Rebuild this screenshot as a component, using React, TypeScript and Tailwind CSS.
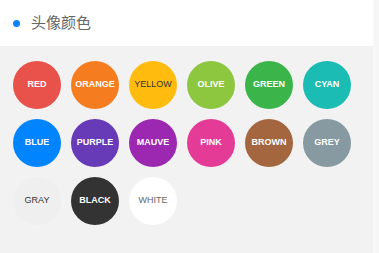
const colors = [
  { name: 'RED', bg: 'bg-[#e8524a]', text: 'text-white font-bold' },
  { name: 'ORANGE', bg: 'bg-[#f57d20]', text: 'text-white font-bold' },
  { name: 'YELLOW', bg: 'bg-[#ffbc0f]', text: 'text-[#333333]' },
  { name: 'OLIVE', bg: 'bg-[#8dc63f]', text: 'text-white font-bold' },
  { name: 'GREEN', bg: 'bg-[#3bb54a]', text: 'text-white font-bold' },
  { name: 'CYAN', bg: 'bg-[#1bbcb3]', text: 'text-white font-bold' },
  { name: 'BLUE', bg: 'bg-[#0084ff]', text: 'text-white font-bold' },
  { name: 'PURPLE', bg: 'bg-[#673ab7]', text: 'text-white font-bold' },
  { name: 'MAUVE', bg: 'bg-[#9c27b0]', text: 'text-white font-bold' },
  { name: 'PINK', bg: 'bg-[#e43b96]', text: 'text-white font-bold' },
  { name: 'BROWN', bg: 'bg-[#a3663e]', text: 'text-white font-bold' },
  { name: 'GREY', bg: 'bg-[#8799a1]', text: 'text-white font-bold' },
  { name: 'GRAY', bg: 'bg-[#efefef]', text: 'text-[#333333]' },
  { name: 'BLACK', bg: 'bg-[#333333]', text: 'text-white font-bold' },
  { name: 'WHITE', bg: 'bg-white', text: 'text-[#666666]' },
];

export default function App() {
  return (
    <div className="flex h-[253px] w-[379px] bg-[#f2f2f2] font-['Liberation_Sans','Noto_Sans_CJK_SC',sans-serif]">
      <div className="flex-1">
        <div className="flex h-[46px] items-center bg-white pl-[13px]">
          <span className="h-[7px] w-[7px] rounded-full bg-[#0a84ff]" />
          <span className="ml-[11px] text-[15px] text-[#666666]">头像颜色</span>
        </div>
        <div className="grid grid-cols-[repeat(6,48px)] gap-[10px] pl-[13px] pt-[15px]">
          {colors.map(c => (
            <div
              key={c.name}
              className={`flex h-[48px] w-[48px] items-center justify-center rounded-full text-[9px] ${c.bg} ${c.text}`}
            >
              {c.name}
            </div>
          ))}
        </div>
      </div>
      <div className="w-[6px] border-l border-[#fafafa] bg-[#f6f6f6]" />
    </div>
  );
}
